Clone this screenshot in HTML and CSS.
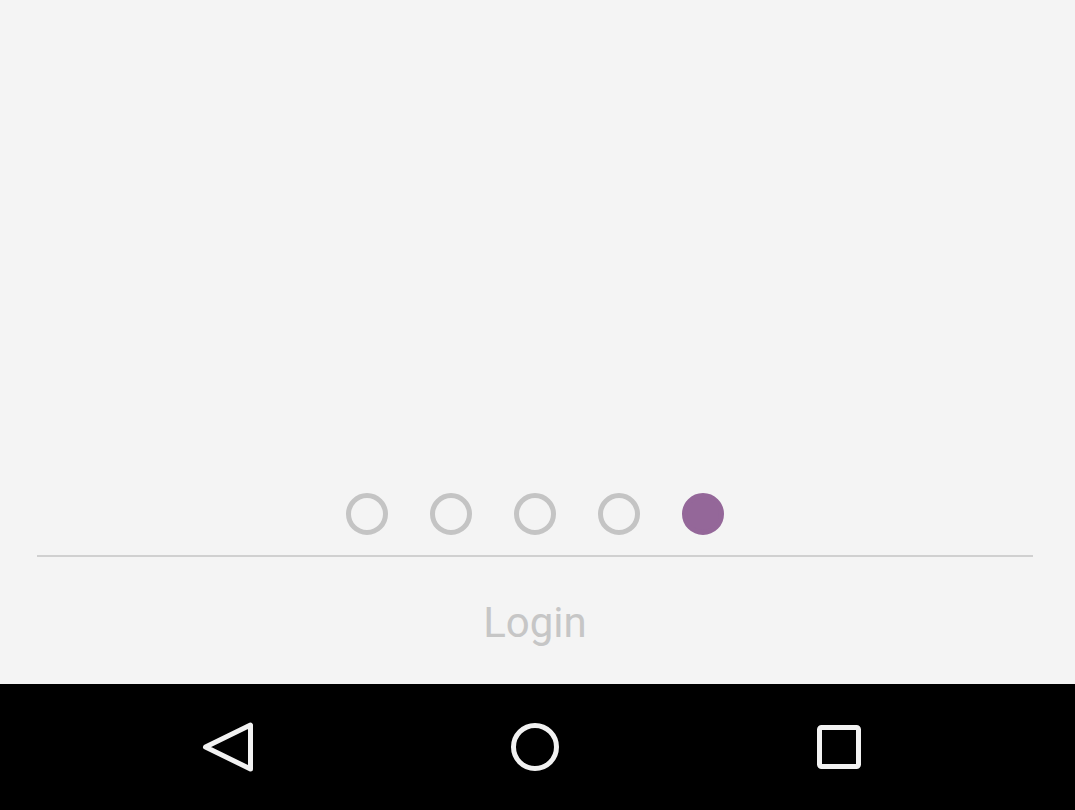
FILE: index.html
```html
<!DOCTYPE html>
<html>
<head>
<meta charset="utf-8">
<link rel="stylesheet" href="styles.css">
</head>
<body>
<div class="screen">
  <main class="content">
    <div class="spacer"></div>
    <div class="dots">
      <span class="dot"></span>
      <span class="dot"></span>
      <span class="dot"></span>
      <span class="dot"></span>
      <span class="dot active"></span>
    </div>
    <div class="divider"></div>
    <div class="login">Login</div>
  </main>
  <nav class="navbar">
    <svg class="nav-icon back" width="60" height="60" viewBox="0 0 60 60">
      <path d="M52.5 8 L52.5 52 L7.5 30 Z" fill="none" stroke="#f2f2f2" stroke-width="5" stroke-linejoin="round"/>
    </svg>
    <svg class="nav-icon home" width="60" height="60" viewBox="0 0 60 60">
      <circle cx="30" cy="30" r="21.5" fill="none" stroke="#f2f2f2" stroke-width="5"/>
    </svg>
    <svg class="nav-icon recents" width="60" height="60" viewBox="0 0 60 60">
      <rect x="10.5" y="10.5" width="39" height="39" rx="2" fill="none" stroke="#f2f2f2" stroke-width="5"/>
    </svg>
  </nav>
</div>
</body>
</html>
```
FILE: styles.css
```css
html, body {
  margin: 0;
  padding: 0;
}
body {
  background: #f4f4f4;
  font-family: Roboto, "Noto Sans", sans-serif;
}
.screen {
  width: 1075px;
  height: 810px;
  display: flex;
  flex-direction: column;
}
.content {
  height: 684px;
  display: flex;
  flex-direction: column;
  background: #f4f4f4;
}
.spacer {
  height: 493px;
}
.dots {
  display: flex;
  justify-content: center;
  gap: 42px;
  height: 42px;
  padding-right: 5px;
}
.dot {
  width: 42px;
  height: 42px;
  box-sizing: border-box;
  border-radius: 50%;
  border: 5px solid #c4c4c4;
}
.dot.active {
  background: #946799;
  border-color: #946799;
}
.divider {
  margin: 20px 42px 0 37px;
  height: 2px;
  background: #d0d0d0;
}
.login {
  margin-top: 41px;
  padding-right: 5px;
  text-align: center;
  font-size: 42px;
  line-height: 50px;
  color: #c6c6c6;
}
.navbar {
  height: 126px;
  background: #000;
  display: flex;
  align-items: center;
}
.nav-icon {
  display: block;
}
.back {
  margin-left: 198px;
}
.home {
  margin-left: 247px;
}
.recents {
  margin-left: 244px;
}
```
